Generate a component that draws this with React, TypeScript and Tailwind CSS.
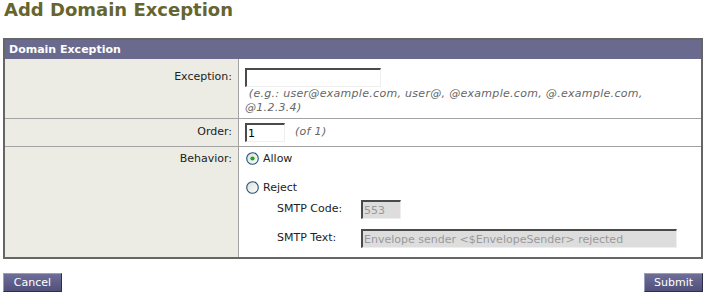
import React from 'react';

function Radio({ checked }: { checked?: boolean }) {
  return (
    <svg width="13" height="13" viewBox="0 0 13 13" className="shrink-0">
      <defs>
        <linearGradient id={checked ? 'rg1' : 'rg2'} x1="0" y1="0" x2="1" y2="1">
          <stop offset="0" stopColor="#dcdcd6" />
          <stop offset="1" stopColor="#ffffff" />
        </linearGradient>
      </defs>
      <circle cx="6.5" cy="6.5" r="5.8" fill={`url(#${checked ? 'rg1' : 'rg2'})`} stroke="#1c5180" strokeWidth="1.1" />
      {checked && <circle cx="6.5" cy="6.5" r="2.1" fill="#21a121" />}
    </svg>
  );
}

const inputCls =
  'h-[19px] border-t-2 border-l-2 border-b border-r border-t-[#4a4a4a] border-l-[#4a4a4a] border-b-[#eeeeee] border-r-[#eeeeee] px-[1px] text-[11px] leading-[15px] outline-none';

export default function App() {
  return (
    <div className="w-[704px] h-[293px] overflow-hidden bg-white font-['DejaVu_Sans',Verdana,sans-serif] text-[11px] text-[#222]">
      <h1 className="pl-[4px] text-[18px] leading-[20px] font-bold text-[#666530]">Add Domain Exception</h1>

      <div className="mt-[18px] ml-[3px] w-[700px] border-2 border-[#666666]">
        <div className="h-[19px] bg-[#6a6a8e] pl-[4px] font-bold text-white leading-[19px]">Domain Exception</div>

        {/* exception */}
        <div className="grid grid-cols-[234px_1fr] border-b border-[#a3a3a3]">
          <div className="bg-[#ecece4] border-r border-[#a3a3a3] pt-[11px] pr-[6px] text-right leading-[13px]">Exception:</div>
          <div className="pt-[9px] pl-[6px] pb-[3px]">
            <input className={`${inputCls} w-[136px] bg-white`} defaultValue="" />
            <div className="italic text-[#666] leading-[14px] tracking-[0.3px]">
              {'\u00a0'}(e.g.: user@example.com, user@, @example.com, @.example.com,
              <br />
              @1.2.3.4)
            </div>
          </div>
        </div>

        {/* order */}
        <div className="grid grid-cols-[234px_1fr] border-b border-[#a3a3a3]">
          <div className="bg-[#ecece4] border-r border-[#a3a3a3] pt-[6px] pr-[6px] text-right leading-[13px]">Order:</div>
          <div className="flex items-center gap-[10px] pt-[4px] pb-[4px] pl-[6px]">
            <input className={`${inputCls} w-[40px] bg-white text-black`} defaultValue="1" />
            <span className="italic text-[#666] tracking-[0.3px]">(of 1)</span>
          </div>
        </div>

        {/* behavior */}
        <div className="grid grid-cols-[234px_1fr]">
          <div className="bg-[#ecece4] border-r border-[#a3a3a3] pt-[5px] pr-[6px] text-right leading-[13px]">Behavior:</div>
          <div className="pt-[5px] pl-[7px] pb-[9px]">
            <label className="flex items-center gap-[4px] h-[13px] leading-[13px]">
              <Radio checked />
              <span>Allow</span>
            </label>
            <label className="mt-[16px] flex items-center gap-[4px] h-[13px] leading-[13px]">
              <Radio />
              <span>Reject</span>
            </label>
            <div className="mt-[6px] pl-[31px] flex items-center">
              <span className="w-[84px]">SMTP Code:</span>
              <input disabled className={`${inputCls} w-[40px] bg-[#dddddd] text-[#999]`} defaultValue="553" />
            </div>
            <div className="mt-[10px] pl-[31px] flex items-center">
              <span className="w-[84px]">SMTP Text:</span>
              <input
                disabled
                className={`${inputCls} w-[316px] bg-[#dddddd] text-[#999]`}
                defaultValue="Envelope sender <$EnvelopeSender> rejected"
              />
            </div>
          </div>
        </div>
      </div>

      <div className="mt-[14px] ml-[3px] w-[700px] flex justify-between">
        <button className="w-[59px] h-[19px] border border-t-[#9c9cc0] border-l-[#9c9cc0] border-b-[#2e2e48] border-r-[#2e2e48] bg-gradient-to-b from-[#6e6e98] to-[#50507a] text-white text-[11px] leading-[17px]">
          Cancel
        </button>
        <button className="w-[59px] h-[19px] border border-t-[#9c9cc0] border-l-[#9c9cc0] border-b-[#2e2e48] border-r-[#2e2e48] bg-gradient-to-b from-[#6e6e98] to-[#50507a] text-white text-[11px] leading-[17px]">
          Submit
        </button>
      </div>
    </div>
  );
}
